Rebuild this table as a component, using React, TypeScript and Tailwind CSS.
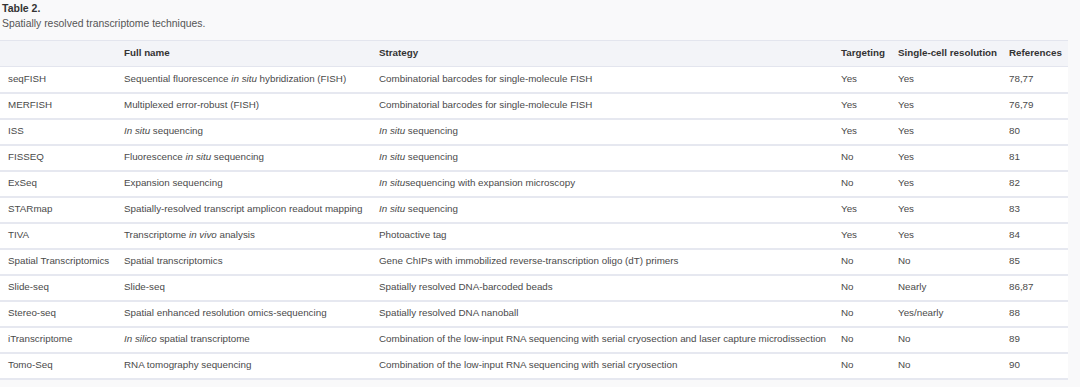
import type { ReactNode } from "react";

type Row = {
  abbr: string;
  name: ReactNode;
  strategy: ReactNode;
  targeting: string;
  single: string;
  refs: string;
};

const rows: Row[] = [
  {
    abbr: "seqFISH",
    name: (
      <>
        Sequential fluorescence <i>in situ</i> hybridization (FISH)
      </>
    ),
    strategy: "Combinatorial barcodes for single-molecule FISH",
    targeting: "Yes",
    single: "Yes",
    refs: "78,77",
  },
  {
    abbr: "MERFISH",
    name: "Multiplexed error-robust (FISH)",
    strategy: "Combinatorial barcodes for single-molecule FISH",
    targeting: "Yes",
    single: "Yes",
    refs: "76,79",
  },
  {
    abbr: "ISS",
    name: (
      <>
        <i>In situ</i> sequencing
      </>
    ),
    strategy: (
      <>
        <i>In situ</i> sequencing
      </>
    ),
    targeting: "Yes",
    single: "Yes",
    refs: "80",
  },
  {
    abbr: "FISSEQ",
    name: (
      <>
        Fluorescence <i>in situ</i> sequencing
      </>
    ),
    strategy: (
      <>
        <i>In situ</i> sequencing
      </>
    ),
    targeting: "No",
    single: "Yes",
    refs: "81",
  },
  {
    abbr: "ExSeq",
    name: "Expansion sequencing",
    strategy: (
      <>
        <i>In situ</i>sequencing with expansion microscopy
      </>
    ),
    targeting: "No",
    single: "Yes",
    refs: "82",
  },
  {
    abbr: "STARmap",
    name: "Spatially-resolved transcript amplicon readout mapping",
    strategy: (
      <>
        <i>In situ</i> sequencing
      </>
    ),
    targeting: "Yes",
    single: "Yes",
    refs: "83",
  },
  {
    abbr: "TIVA",
    name: (
      <>
        Transcriptome <i>in vivo</i> analysis
      </>
    ),
    strategy: "Photoactive tag",
    targeting: "Yes",
    single: "Yes",
    refs: "84",
  },
  {
    abbr: "Spatial Transcriptomics",
    name: "Spatial transcriptomics",
    strategy: "Gene ChIPs with immobilized reverse-transcription oligo (dT) primers",
    targeting: "No",
    single: "No",
    refs: "85",
  },
  {
    abbr: "Slide-seq",
    name: "Slide-seq",
    strategy: "Spatially resolved DNA-barcoded beads",
    targeting: "No",
    single: "Nearly",
    refs: "86,87",
  },
  {
    abbr: "Stereo-seq",
    name: "Spatial enhanced resolution omics-sequencing",
    strategy: "Spatially resolved DNA nanoball",
    targeting: "No",
    single: "Yes/nearly",
    refs: "88",
  },
  {
    abbr: "iTranscriptome",
    name: (
      <>
        <i>In silico</i> spatial transcriptome
      </>
    ),
    strategy:
      "Combination of the low-input RNA sequencing with serial cryosection and laser capture microdissection",
    targeting: "No",
    single: "No",
    refs: "89",
  },
  {
    abbr: "Tomo-Seq",
    name: "RNA tomography sequencing",
    strategy: "Combination of the low-input RNA sequencing with serial cryosection",
    targeting: "No",
    single: "No",
    refs: "90",
  },
];

const App = () => {
  return (
    <div className="w-[1080px] h-[387px] bg-[#f9f9fa] font-['Liberation_Sans',Arial,sans-serif] text-[#4a4a4a] overflow-hidden">
      <div className="px-[2px] pt-[1px] pb-[9px]">
        <div className="text-[10.5px] leading-[15px] font-bold text-[#333]">Table 2.</div>
        <div className="text-[10.4px] leading-[15px] text-[#555]">
          Spatially resolved transcriptome techniques.
        </div>
      </div>
      <table className="w-[1068px] table-fixed border-collapse bg-white text-[9.8px]">
        <colgroup>
          <col className="w-[116px]" />
          <col className="w-[255px]" />
          <col className="w-[462px]" />
          <col className="w-[57px]" />
          <col className="w-[111px]" />
          <col className="w-[67px]" />
        </colgroup>
        <thead>
          <tr className="h-[26px] bg-[#f3f4f8] border-y border-[#e3e5ee] text-left text-[#333]">
            <th className="pl-2 font-bold"></th>
            <th className="pl-2 font-bold">Full name</th>
            <th className="pl-2 font-bold">Strategy</th>
            <th className="pl-2 font-bold">Targeting</th>
            <th className="pl-2 font-bold">Single-cell resolution</th>
            <th className="pl-2 font-bold">References</th>
          </tr>
        </thead>
        <tbody>
          {rows.map((r) => (
            <tr key={r.abbr} className="h-[26px] border-b-2 border-[#e6e8f0]">
              <td className="pl-2 whitespace-nowrap">{r.abbr}</td>
              <td className="pl-2 whitespace-nowrap">{r.name}</td>
              <td className="pl-2 whitespace-nowrap">{r.strategy}</td>
              <td className="pl-2">{r.targeting}</td>
              <td className="pl-2">{r.single}</td>
              <td className="pl-2">{r.refs}</td>
            </tr>
          ))}
        </tbody>
      </table>
    </div>
  );
};

export default App;
